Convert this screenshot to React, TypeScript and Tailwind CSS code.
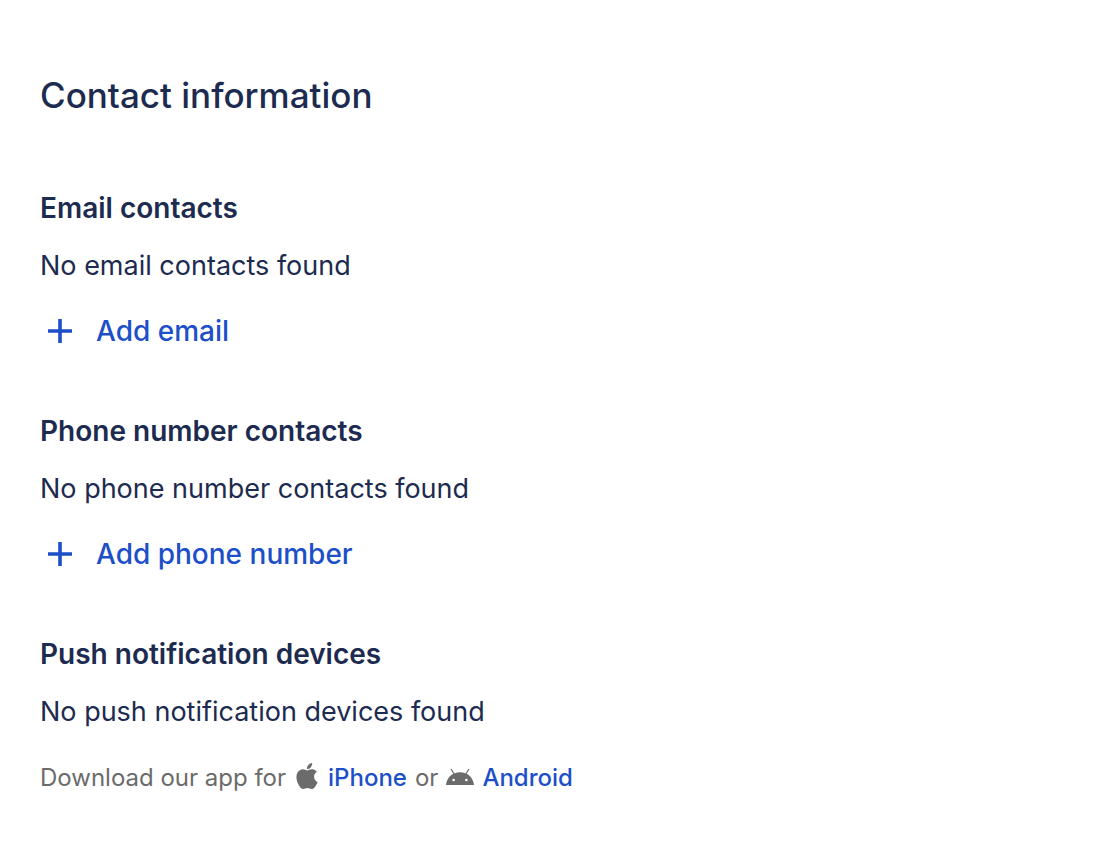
import React from "react";
import { SiApple } from "react-icons/si";

function PlusIcon() {
  return (
    <svg aria-hidden="true" viewBox="0 0 24 24" className="size-6 shrink-0" fill="none" stroke="currentColor" strokeWidth="3.6">
      <path d="M12 0v24M0 12h24" />
    </svg>
  );
}

function AndroidIcon() {
  return (
    <svg aria-hidden="true" viewBox="0 0 28 18" className="mb-0.5 h-[18px] w-7 shrink-0 fill-[#6b6b6b]">
      <path d="M5.2 1.3l3.2 5.2M22.8 1.3l-3.2 5.2" stroke="#6b6b6b" strokeWidth="1.2" strokeLinecap="round" />
      <path
        fillRule="evenodd"
        d="M0 17C.6 9.600 6.500 4.200 14 4.200S27.400 9.600 28 17ZM7.600 10.700a1.300 1.300 0 1 0 0 2.600a1.300 1.300 0 1 0 0-2.600ZM20.400 10.700a1.300 1.300 0 1 0 0 2.600a1.300 1.300 0 1 0 0-2.600Z"
      />
    </svg>
  );
}

type SectionProps = { title: string; empty: string; action?: string };

function ContactSection({ title, empty, action }: SectionProps) {
  return (
    <section>
      <h2 className="text-[28px] leading-8 font-semibold">{title}</h2>
      <p className="mt-6 text-[27px] leading-9">{empty}</p>
      {action && (
        <button type="button" className="mt-[27px] flex cursor-pointer items-center gap-6 px-2 text-[28px] leading-10 font-medium text-[#1d4fc9]">
          <PlusIcon />
          {action}
        </button>
      )}
    </section>
  );
}

export default function App() {
  return (
    <main className="min-h-screen bg-white px-10 pt-[72px] pb-12 font-['Inter',sans-serif] text-[#1c2b4f]">
      <h1 className="text-[35px] leading-[46px] font-medium">Contact information</h1>
      <div className="mt-[74px] flex flex-col gap-16">
        <ContactSection title="Email contacts" empty="No email contacts found" action="Add email" />
        <ContactSection title="Phone number contacts" empty="No phone number contacts found" action="Add phone number" />
        <ContactSection title="Push notification devices" empty="No push notification devices found" />
      </div>
      <p className="mt-8 flex flex-wrap items-center gap-2 text-2xl leading-8 text-[#6b6b6b]">
        <span>Download our app for</span>
        <SiApple aria-hidden="true" className="mb-1 size-[26px]" />
        <a href="#iphone" className="font-medium text-[#1d4fc9]">iPhone</a>
        <span>or</span>
        <AndroidIcon />
        <a href="#android" className="font-medium text-[#1d4fc9]">Android</a>
      </p>
    </main>
  );
}
